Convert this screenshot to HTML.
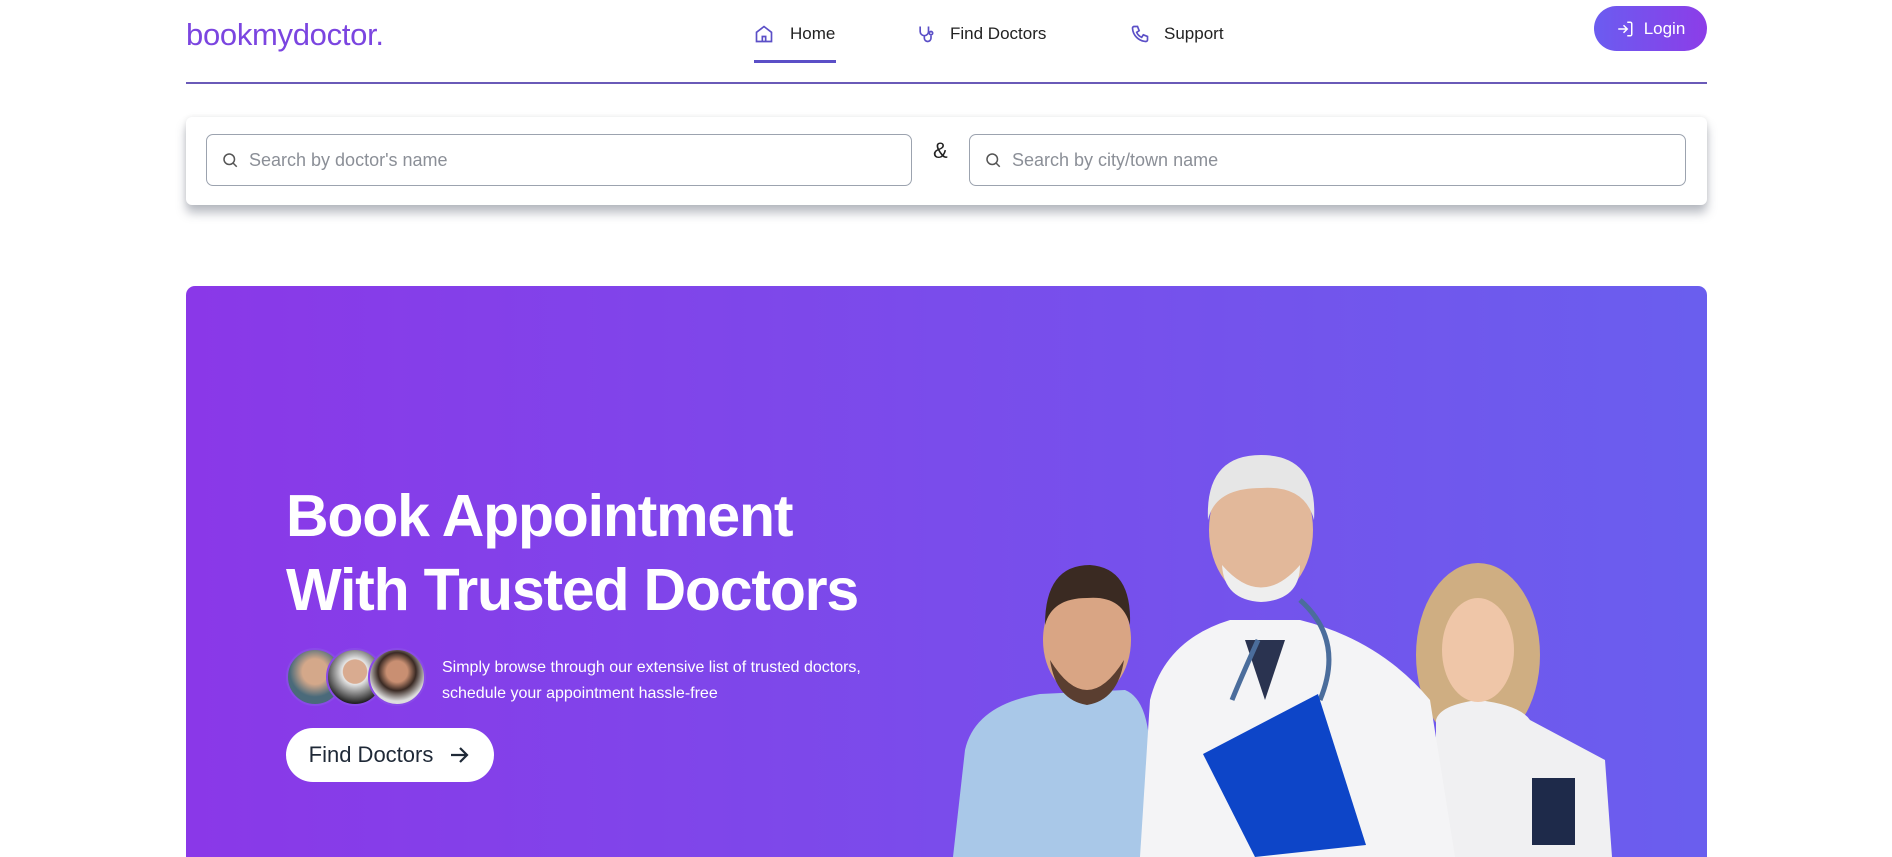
<!DOCTYPE html>
<html><head><meta charset="utf-8"><style>
*{margin:0;padding:0;box-sizing:border-box}
html{width:1892px;height:857px;overflow:hidden}
body{width:1892px;height:857px;overflow:hidden;background:#fff;font-family:"Liberation Sans",sans-serif;position:relative;color:#1f2937}
.abs{position:absolute}
.logo{left:186px;top:17px;font-size:31px;color:#7b45e0;letter-spacing:-0.3px}
.nav{top:24px;font-size:17px;color:#222;display:flex;align-items:center;gap:12px}
.login{left:1594px;top:6px;width:113px;height:45px;border-radius:23px;background:linear-gradient(90deg,#6b5cf0,#8c3de8);color:#fff;font-size:17px;display:flex;align-items:center;justify-content:center;gap:10px}
.line{left:186px;top:82px;width:1521px;height:2px;background:#6a5ab8}
.card{left:186px;top:117px;width:1521px;height:88px;background:#fff;border-radius:6px;box-shadow:0 8px 10px rgba(60,70,90,.35),0 0 6px rgba(0,0,0,.08)}
.inp{top:134px;height:52px;border:1px solid #9ca3af;border-radius:7px;display:flex;align-items:center;padding-left:14px;gap:10px;color:#8b8f97;font-size:18px}
.hero{left:186px;top:286px;width:1521px;height:571px;border-radius:9px 9px 0 0;background:linear-gradient(90deg,#8a38e8 0%,#7a4ceb 50%,#6a5eee 100%);overflow:hidden}
h1{position:absolute;left:286px;top:479px;color:#fff;font-size:59px;line-height:74px;font-weight:bold;letter-spacing:-1.2px}
.p{left:442px;top:655px;color:#fff;font-size:16px;line-height:26px}
.btn{left:286px;top:728px;width:208px;height:54px;border-radius:27px;background:#fff;color:#1f2937;font-size:22px;display:flex;align-items:center;justify-content:center;gap:14px}
.av{top:648px;width:58px;height:58px;border-radius:50%;border:2px solid #8a4ae8}
</style></head><body>
<div class="abs logo">bookmydoctor.</div>

<div class="abs nav" style="left:754px"><svg width="20" height="20" viewBox="0 0 24 24" fill="none" stroke="#5b4fc7" stroke-width="2"><path d="M3 10l9-7 9 7v11H3z"/><path d="M10 21v-6h4v6"/></svg><span style="margin-left:4px">Home</span></div>
<div class="abs" style="left:754px;top:60px;width:82px;height:3px;background:#5b4fc7"></div>
<div class="abs nav" style="left:916px"><svg width="20" height="20" viewBox="0 0 24 24" fill="none" stroke="#5b4fc7" stroke-width="2"><path d="M5 3v6a5 5 0 0 0 10 0V3"/><path d="M10 14v3a4 4 0 0 0 8 0v-3"/><circle cx="18" cy="11" r="2"/></svg><span style="margin-left:2px">Find Doctors</span></div>
<div class="abs nav" style="left:1130px"><svg width="20" height="20" viewBox="0 0 24 24" fill="none" stroke="#5b4fc7" stroke-width="2"><path d="M5 3h4l2 5-3 2a11 11 0 0 0 6 6l2-3 5 2v4a2 2 0 0 1-2 2A17 17 0 0 1 3 5a2 2 0 0 1 2-2z"/></svg><span style="margin-left:2px">Support</span></div>
<div class="abs login"><svg width="18" height="18" viewBox="0 0 24 24" fill="none" stroke="#fff" stroke-width="2"><path d="M15 3h4a2 2 0 0 1 2 2v14a2 2 0 0 1-2 2h-4"/><path d="M10 17l5-5-5-5M15 12H3"/></svg>Login</div>
<div class="abs line"></div>

<div class="abs card"></div>
<div class="abs inp" style="left:206px;width:706px"><svg width="18" height="18" viewBox="0 0 24 24" fill="none" stroke="#555" stroke-width="2"><circle cx="11" cy="11" r="7"/><path d="M16 16l5 5"/></svg>Search by doctor's name</div>
<div class="abs" style="left:933px;top:138px;font-size:22px;color:#222">&amp;</div>
<div class="abs inp" style="left:969px;width:717px"><svg width="18" height="18" viewBox="0 0 24 24" fill="none" stroke="#555" stroke-width="2"><circle cx="11" cy="11" r="7"/><path d="M16 16l5 5"/></svg>Search by city/town name</div>

<div class="abs hero"></div>
<h1>Book Appointment<br>With Trusted Doctors</h1>
<div class="abs av" style="left:286px;background:radial-gradient(circle at 50% 40%,#d4a88a 30%,#4a6a7a 60%)"></div>
<div class="abs av" style="left:326px;background:radial-gradient(circle at 50% 40%,#d9ab90 28%,#e6e6e6 30%,#222 75%)"></div>
<div class="abs av" style="left:368px;background:radial-gradient(circle at 50% 40%,#c98f72 25%,#3a2a24 45%,#ddd 70%)"></div>
<div class="abs p">Simply browse through our extensive list of trusted doctors,<br>schedule your appointment hassle-free</div>
<div class="abs btn">Find Doctors <svg width="24" height="24" viewBox="0 0 24 24" fill="none" stroke="#1f2937" stroke-width="2.2"><path d="M4 12h16M13 5l7 7-7 7"/></svg></div>

<svg class="abs" style="left:0;top:0" width="1892" height="857">
<path d="M953 857 L965 750 Q975 705 1040 694 L1125 690 Q1150 700 1150 760 L1146 857Z" fill="#a9c8e8"/>
<ellipse cx="1087" cy="640" rx="44" ry="58" fill="#d9a584"/>
<path d="M1045 625 Q1045 565 1090 565 Q1132 568 1130 625 Q1122 595 1087 598 Q1052 598 1045 625Z" fill="#3a2a22"/>
<path d="M1050 660 Q1087 720 1124 660 Q1118 700 1087 705 Q1056 700 1050 660Z" fill="#5a3e30"/>
<ellipse cx="1478" cy="655" rx="62" ry="92" fill="#cfae82"/>
<path d="M1436 720 Q1440 705 1478 700 Q1520 705 1530 720 L1605 760 L1612 857 L1436 857Z" fill="#f0f0f2"/>
<ellipse cx="1478" cy="650" rx="36" ry="52" fill="#efc6a8"/>
<rect x="1532" y="778" width="43" height="67" fill="#1e2a4a"/>
<path d="M1140 857 L1150 700 Q1165 640 1230 620 L1300 620 Q1380 640 1430 700 L1455 857Z" fill="#f4f4f6"/>
<path d="M1245 640 L1265 700 L1285 640Z" fill="#2a3350"/>
<path d="M1258 640 Q1240 680 1232 700 M1300 600 Q1345 640 1320 700" stroke="#4b6d9c" stroke-width="5" fill="none"/>
<ellipse cx="1261" cy="530" rx="52" ry="70" fill="#e2b89a"/>
<path d="M1208 520 Q1205 455 1261 455 Q1318 455 1314 520 Q1305 485 1261 488 Q1215 488 1208 520Z" fill="#e6e6e6"/>
<path d="M1222 565 Q1261 610 1300 565 Q1300 600 1261 602 Q1224 600 1222 565Z" fill="#eeeeee"/>
<polygon points="1203,754 1318,694 1366,845 1255,857" fill="#0d45c8"/>
</svg>
</body></html>
